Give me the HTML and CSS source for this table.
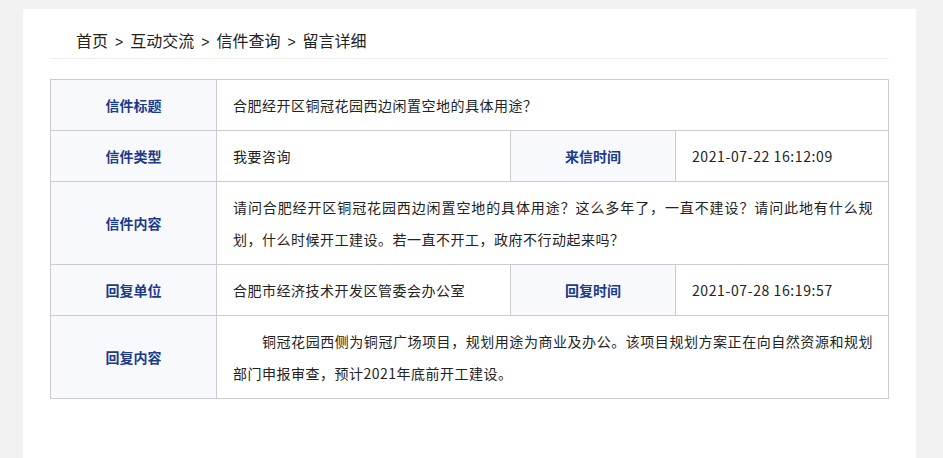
FILE: index.html
```html
<!DOCTYPE html>
<html lang="zh-CN">
<head>
<meta charset="utf-8">
<title>留言详细</title>
<link rel="stylesheet" href="styles.css">
</head>
<body>
<div class="page">
  <div class="crumbs">首页<span class="sep">&gt;</span>互动交流<span class="sep">&gt;</span>信件查询<span class="sep">&gt;</span>留言详细</div>
  <table class="detail">
    <colgroup>
      <col class="c1"><col class="c2"><col class="c3"><col class="c4">
    </colgroup>
    <tr>
      <th>信件标题</th>
      <td colspan="3">合肥经开区铜冠花园西边闲置空地的具体用途？</td>
    </tr>
    <tr>
      <th>信件类型</th>
      <td>我要咨询</td>
      <th>来信时间</th>
      <td class="date">2021-07-22 16:12:09</td>
    </tr>
    <tr>
      <th>信件内容</th>
      <td colspan="3" class="multi">请问合肥经开区铜冠花园西边闲置空地的具体用途？这么多年了，一直不建设？请问此地有什么规划，什么时候开工建设。若一直不开工，政府不行动起来吗？</td>
    </tr>
    <tr>
      <th>回复单位</th>
      <td>合肥市经济技术开发区管委会办公室</td>
      <th>回复时间</th>
      <td class="date">2021-07-28 16:19:57</td>
    </tr>
    <tr>
      <th>回复内容</th>
      <td colspan="3" class="multi indent">铜冠花园西侧为铜冠广场项目，规划用途为商业及办公。该项目规划方案正在向自然资源和规划部门申报审查，预计2021年底前开工建设。</td>
    </tr>
  </table>
</div>
</body>
</html>
```

FILE: styles.css
```css
html, body {
  margin: 0;
  padding: 0;
  background: #f2f2f2;
}
body {
  font-family: "Noto Sans CJK SC", "Liberation Sans", sans-serif;
  color: #333;
}
.page {
  margin: 9px 0 0 23px;
  width: 839px;
  min-height: 460px;
  background: #fff;
  padding: 19px 27px 0 27px;
}
.crumbs {
  display: flex;
  align-items: baseline;
  height: 24px;
  font-size: 16px;
  line-height: 24px;
  color: #222;
  padding: 0 0 6px 26px;
  border-bottom: 1px solid #eeeeee;
  margin-bottom: 20px;
}
.crumbs .sep {
  margin: 0 7px;
  font-size: 14px;
  font-family: "Liberation Sans", sans-serif;
}
.detail {
  width: 838px;
  border-collapse: collapse;
  table-layout: fixed;
}
.c1 { width: 166px; }
.c2 { width: 294px; }
.c3 { width: 165px; }
.c4 { width: 213px; }
.detail th,
.detail td {
  border: 1px solid #cccccc;
  font-size: 14px;
  line-height: 32px;
  padding: 9px 0;
  vertical-align: middle;
}
.detail th {
  background: #f7f9fd;
  color: #1b3a8c;
  font-weight: bold;
  text-align: center;
}
.detail td {
  text-align: justify;
  padding-left: 16px;
  padding-right: 15px;
  letter-spacing: 0.5px;
  color: #222;
}
.detail td.date {
  letter-spacing: 0.6px;
}
.detail td.indent {
  text-indent: 29px;
}
```
